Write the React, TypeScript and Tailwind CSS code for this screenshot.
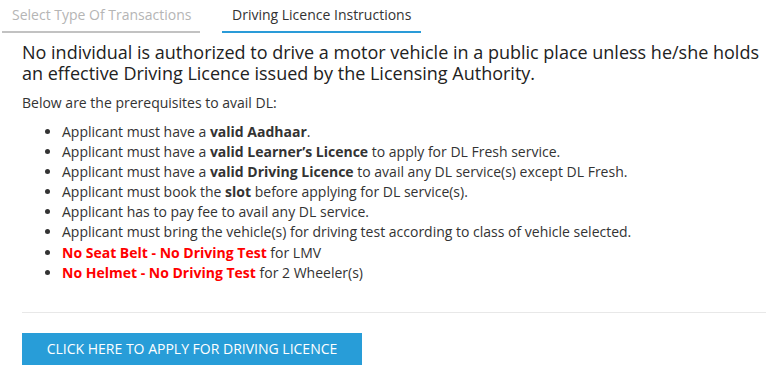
export default function App() {
  return (
    <div className="min-h-[373px] w-[766px] bg-white font-['Open_Sans',sans-serif] text-[#333]">
      <div className="flex pl-[2px] pt-[5px]">
        <div className="w-[198px] border-b-2 border-[#c2c2c2] pb-[7px] pl-[10px] text-[14px] leading-[19px] text-[#b5b5b5]">
          Select Type Of Transactions
        </div>
        <div className="ml-[22px] w-[199px] border-b-2 border-[#2a9bd8] pb-[7px] pl-[10px] text-[14px] leading-[19px] text-[#333]">
          Driving Licence Instructions
        </div>
      </div>

      <div className="pl-[22px]">
        <h3 className="mt-[9px] text-[18px] leading-[21px] text-[#222]">
          No individual is authorized to drive a motor vehicle in a public place unless he/she holds
          <br />
          an effective Driving Licence issued by the Licensing Authority.
        </h3>
        <p className="mt-[9px] text-[14px] leading-[20px]">Below are the prerequisites to avail DL:</p>
        <ul className="mt-[9px] list-disc pl-[40px] text-[14px] leading-[20.1px]">
          <li>
            Applicant must have a <b>valid Aadhaar</b>.
          </li>
          <li>
            Applicant must have a <b>valid Learner’s Licence</b> to apply for DL Fresh service.
          </li>
          <li>
            Applicant must have a <b>valid Driving Licence</b> to avail any DL service(s) except DL Fresh.
          </li>
          <li>
            Applicant must book the <b>slot</b> before applying for DL service(s).
          </li>
          <li>Applicant has to pay fee to avail any DL service.</li>
          <li>Applicant must bring the vehicle(s) for driving test according to class of vehicle selected.</li>
          <li>
            <b className="text-[#ff0000]">No Seat Belt - No Driving Test</b> for LMV
          </li>
          <li>
            <b className="text-[#ff0000]">No Helmet - No Driving Test</b> for 2 Wheeler(s)
          </li>
        </ul>
        <hr className="mt-[29px] border-t border-[#e8e8e8]" />
        <button className="mt-[20px] h-[32px] w-[340px] bg-[#289dd8] text-[14px] text-white">
          CLICK HERE TO APPLY FOR DRIVING LICENCE
        </button>
      </div>
    </div>
  );
}
